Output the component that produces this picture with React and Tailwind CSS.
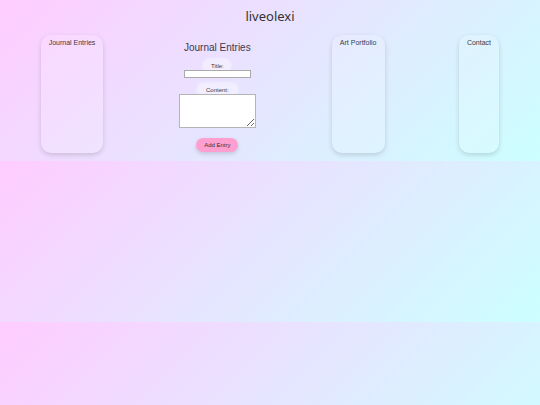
import React from 'react'

function SideCard({ title, width }) {
    return (
        <div className={`${width} h-[118px] rounded-[10px] bg-white/15 shadow-[0_2px_5px_rgba(0,0,0,0.15)] pt-[3px] flex flex-col items-center`}>
            <h3 className="text-[7px] leading-[10px] text-[#3a3a4a] whitespace-nowrap">{title}</h3>
        </div>
    )
}

function Label({ children, width }) {
    return (
        <div className={`${width} h-[13px] rounded-[7px] bg-white/40 shadow-[0_0_3px_rgba(255,255,255,0.7)] flex items-center justify-center -mb-[2px]`}>
            <span className="text-[6px] leading-[8px] text-[#3a3a4a]">{children}</span>
        </div>
    )
}

function App() {
    return (
        <div className="min-h-[405px] bg-[linear-gradient(135deg,#ffccff,#ccffff)] bg-[length:100%_161px] font-['Liberation_Sans',sans-serif]">
            <header className="h-[35px] flex items-center justify-center">
                <h1 className="text-[13px] leading-[16px] text-[#333] font-['Noto_Sans',sans-serif] -mt-[3px]">liveolexi</h1>
            </header>
            <main className="flex justify-between items-start px-[41px]">
                <SideCard title="Journal Entries" width="w-[62px]" />
                <form className="w-[80px] flex flex-col items-center pt-[7px]">
                    <h2 className="text-[10px] leading-[12px] text-[#3a3a4a] mb-[5px]">Journal Entries</h2>
                    <Label width="w-[28px]">Title:</Label>
                    <input type="text" className="w-[67px] h-[8px] bg-white border border-[#aaa] relative" />
                    <div className="h-[5px]" />
                    <Label width="w-[41px]">Content:</Label>
                    <textarea className="w-[77px] h-[34px] bg-white border border-[#b5b5b5] relative block" />
                    <button type="button" className="mt-[10px] w-[42px] h-[14px] rounded-full bg-[#ff9fd0] shadow-[0_2px_4px_rgba(0,0,0,0.15)] text-[6px] text-[#333] flex items-center justify-center">
                        Add Entry
                    </button>
                </form>
                <SideCard title="Art Portfolio" width="w-[53px]" />
                <SideCard title="Contact" width="w-[40px]" />
            </main>
        </div>
    )
}

export default App
